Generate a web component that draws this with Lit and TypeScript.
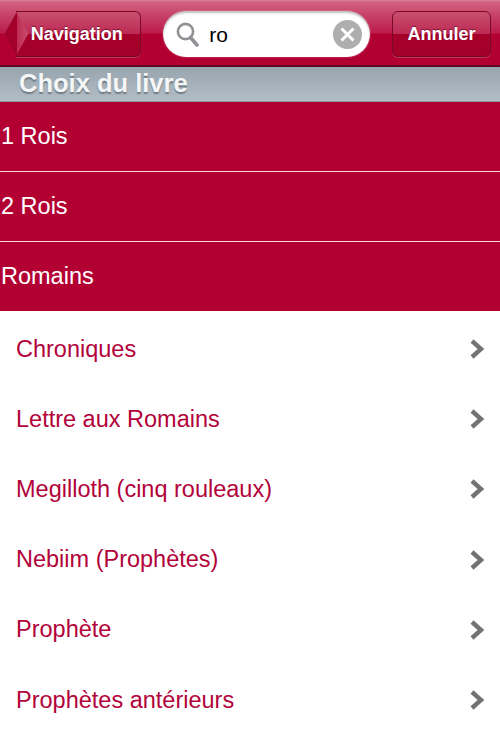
import { LitElement, html, css, svg } from "lit";
import { customElement } from "lit/decorators.js";

const selected = ["1 Rois", "2 Rois", "Romains"];
const items = [
  "Chroniques",
  "Lettre aux Romains",
  "Megilloth (cinq rouleaux)",
  "Nebiim (Prophètes)",
  "Prophète",
  "Prophètes antérieurs",
];

@customElement("app-root")
export class AppRoot extends LitElement {
  static styles = css`
    :host {
      display: block;
      width: 500px;
      height: 750px;
      overflow: hidden;
      background: #fff;
      font-family: "Liberation Sans", Arial, sans-serif;
    }
    .bar {
      height: 67px;
      box-sizing: border-box;
      border-bottom: 2px solid #5c0a22;
      background: linear-gradient(#dc8099 0, #d2627f 2px, #c64067 16px, #bc1c4a 33px, #b30033 34px, #b30033 100%);
      display: flex;
      align-items: flex-start;
      padding: 11px 9px 0 8px;
    }
    .btn {
      height: 46px;
      box-sizing: border-box;
      color: #fff;
      font-weight: bold;
      font-size: 18px;
      display: flex;
      align-items: center;
      justify-content: center;
      text-shadow: 0 -1px 1px rgba(80, 0, 20, 0.6);
      box-shadow: 0 1px 0 rgba(255, 255, 255, 0.2);
    }
    .back {
      width: 128px;
      position: relative;
      margin-left: 8px;
      border: 1px solid #7a0a2a;
      border-left: none;
      border-radius: 0 6px 6px 0;
      padding-right: 3px;
      background: linear-gradient(#c9506f 0, #bd2a54 50%, #a50029 51%, #a3002a 100%);
    }
    .back::before {
      content: "";
      position: absolute;
      left: -8px;
      top: 6px;
      width: 31px;
      height: 31px;
      box-sizing: border-box;
      transform: scaleX(0.55) rotate(45deg);
      transform-origin: center;
      margin-left: -7px;
      border-left: 1px solid #7a0a2a;
      border-bottom: 1px solid #7a0a2a;
      border-radius: 0 0 0 3px;
      background: linear-gradient(45deg, #a3002a 0, #a50029 50%, #bd2a54 51%, #c9506f 100%);
      z-index: 0;
    }
    .back span {
      position: relative;
    }
    .search {
      width: 211px;
      height: 46px;
      margin-left: 22px;
      box-sizing: border-box;
      background: #fff;
      border-radius: 23px;
      box-shadow: inset 0 2px 2px rgba(0, 0, 0, 0.25), 0 0 0 1px rgba(255, 255, 255, 0.12);
      display: flex;
      align-items: center;
      padding: 0 8px 0 13px;
      color: #000;
      font-size: 21px;
    }
    .search .mag {
      width: 23px;
      height: 25px;
      margin-right: 10px;
      flex: none;
    }
    .search .val {
      flex: 1;
      margin-top: 1px;
    }
    .search .clear {
      width: 29px;
      height: 29px;
      flex: none;
    }
    .cancel {
      width: 101px;
      margin-left: 22px;
      border: 1px solid #7a0a2a;
      border-radius: 6px;
      background: linear-gradient(#c9506f 0, #bd2a54 50%, #a50029 51%, #a3002a 100%);
    }
    .section {
      height: 35px;
      box-sizing: border-box;
      padding-left: 19px;
      background: linear-gradient(#98a5ae, #b2bdc5);
      border-bottom: 1px solid #8d99a3;
      color: #f4f6f7;
      font-weight: bold;
      font-size: 25.5px;
      line-height: 33px;
      text-shadow: 0 2px 1px rgba(70, 80, 90, 0.55);
    }
    .sel {
      height: 69px;
      box-sizing: border-box;
      background: #b30033;
      color: #fff;
      font-size: 23.5px;
      display: flex;
      align-items: center;
      padding: 0 0 1px 1px;
    }
    .sel + .sel {
      height: 70px;
      border-top: 1px solid #f1dbe1;
    }
    .list {
      padding-top: 3px;
    }
    .row {
      height: 70.2px;
      display: flex;
      align-items: center;
      justify-content: space-between;
      padding: 0 15px 0 16px;
      color: #b2033a;
      font-size: 23.5px;
    }
    .row svg {
      width: 16px;
      height: 22px;
      flex: none;
    }
  `;

  render() {
    return html`
      <div class="bar">
        <div class="btn back"><span>Navigation</span></div>
        <div class="search">
          <svg class="mag" viewBox="0 0 23 25">
            <circle cx="9.5" cy="9.5" r="7.6" fill="none" stroke="#8f9194" stroke-width="2.6"></circle>
            <path d="M14.5 15.5 L21 23" stroke="#8f9194" stroke-width="3.6" stroke-linecap="round"></path>
          </svg>
          <span class="val">ro</span>
          <svg class="clear" viewBox="0 0 29 29">
            <circle cx="14.5" cy="14.5" r="14.5" fill="#aeaeae"></circle>
            <path d="M8.5 8.5 L20.5 20.5 M20.5 8.5 L8.5 20.5" stroke="#fff" stroke-width="3"></path>
          </svg>
        </div>
        <div class="btn cancel">Annuler</div>
      </div>
      <div class="section">Choix du livre</div>
      ${selected.map((s) => html`<div class="sel">${s}</div>`)}
      <div class="list">
        ${items.map(
          (s) => html`<div class="row">
            <span>${s}</span>
            ${svg``}
            <svg viewBox="0 0 16 22">
              <path d="M3 3 L12 11 L3 19" fill="none" stroke="#737373" stroke-width="4.4"></path>
            </svg>
          </div>`
        )}
      </div>
    `;
  }
}
